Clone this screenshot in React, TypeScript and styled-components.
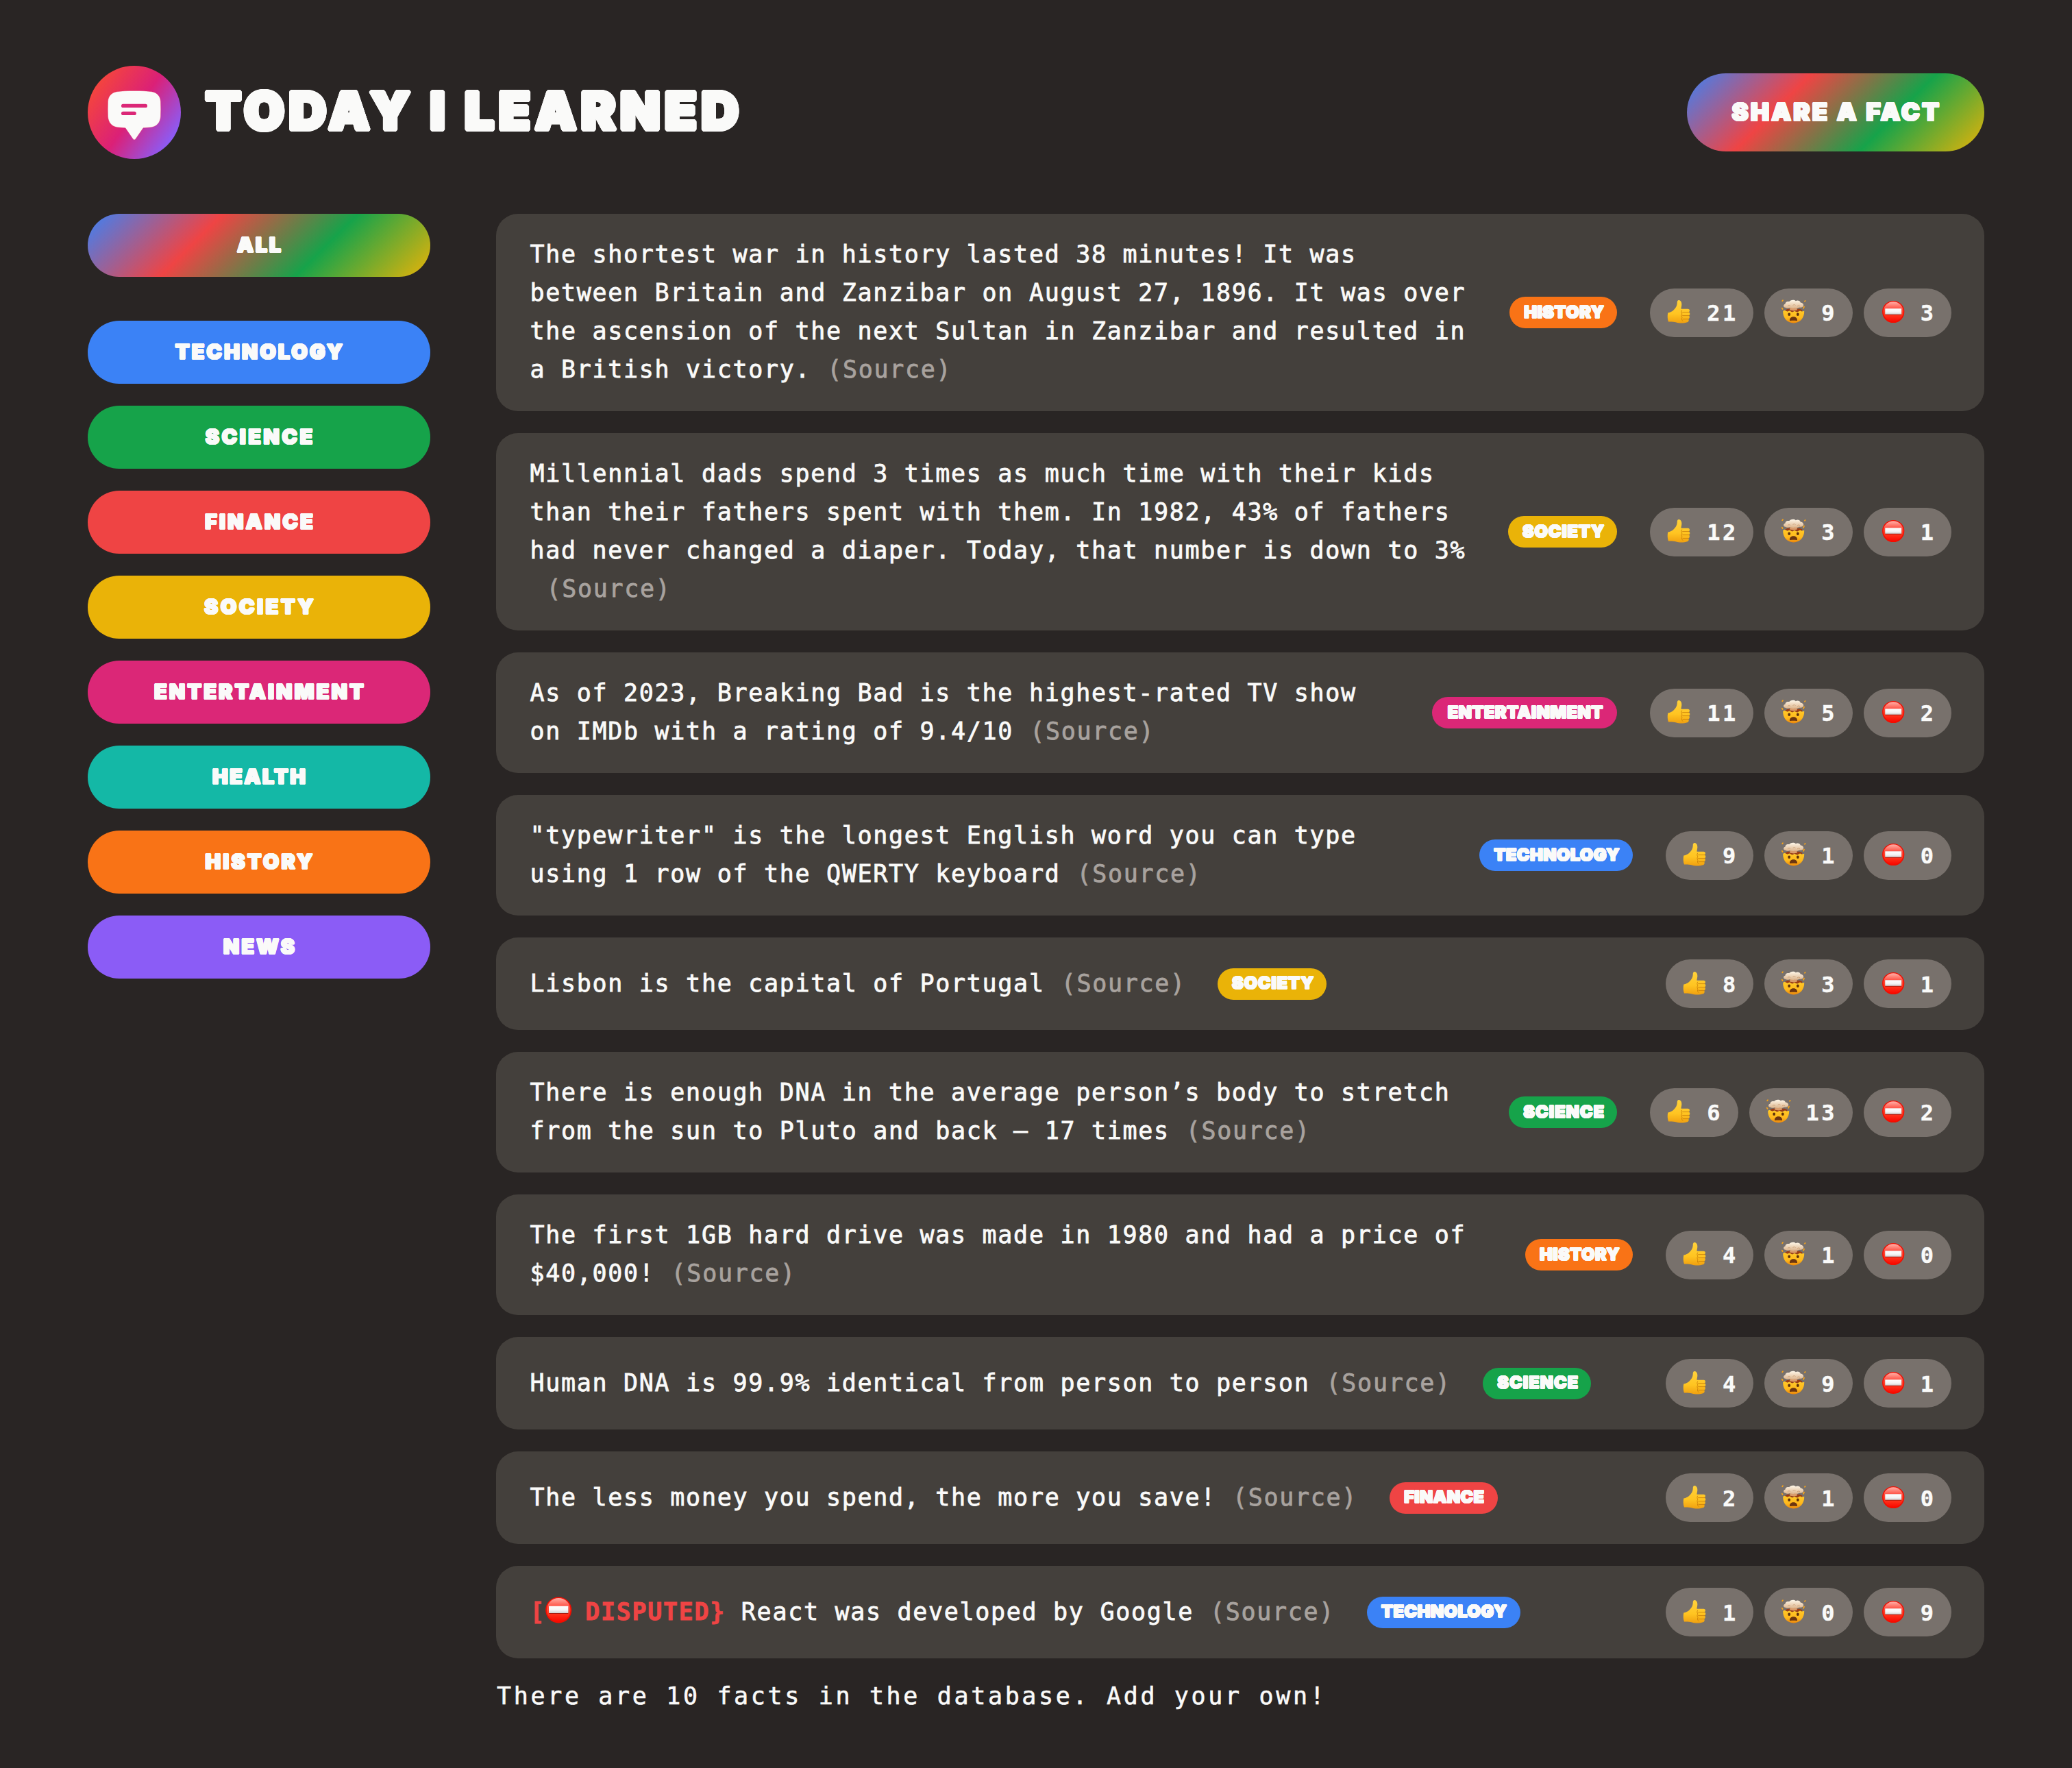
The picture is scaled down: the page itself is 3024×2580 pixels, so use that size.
import React from "react";
import styled, { createGlobalStyle, css } from "styled-components";

const GlobalStyle = createGlobalStyle`
  *, *::before, *::after { box-sizing: border-box; margin: 0; padding: 0; }
  body {
    background: #292524;
    color: #fafaf9;
    font-family: "DejaVu Sans Mono", "Liberation Mono", monospace;
  }
`;

const rainbow = "linear-gradient(135deg, #3b82f6, #ef4444, #16a34a, #eab308)";

/* Thickens and rounds the display letters by r pixels on every side. */
const roundLetters = (r: number) => {
  const d = (r * 0.707).toFixed(2);
  const a = (r * 0.924).toFixed(2);
  const b = (r * 0.383).toFixed(2);
  return [
    `${r}px 0`, `-${r}px 0`, `0 ${r}px`, `0 -${r}px`,
    `${d}px ${d}px`, `-${d}px ${d}px`, `${d}px -${d}px`, `-${d}px -${d}px`,
    `${a}px ${b}px`, `-${a}px ${b}px`, `${a}px -${b}px`, `-${a}px -${b}px`,
    `${b}px ${a}px`, `-${b}px ${a}px`, `${b}px -${a}px`, `-${b}px -${a}px`,
  ].join(", ");
};

const display = css`
  font-family: "Inter", "Open Sans", sans-serif;
  font-weight: 900;
  text-transform: uppercase;
  white-space: nowrap;
  color: #fafaf9;
`;

const Page = styled.div`
  min-height: 2580px;
  padding: 96px 128px;
  display: flex;
  flex-direction: column;
  gap: 80px;
`;

const Header = styled.header`
  height: 136px;
  display: flex;
  align-items: center;
  justify-content: space-between;
`;

const Brand = styled.div`
  display: flex;
  align-items: center;
  gap: 36px;
`;

const Title = styled.h1`
  ${display}
  font-size: 75.5px;
  line-height: 1;
  letter-spacing: 6.9px;
  padding-bottom: 5px;
  text-shadow: ${roundLetters(3.2)};
`;

const ShareButton = styled.button`
  ${display}
  width: 434px;
  height: 114px;
  padding: 0 0 2px 3px;
  border: none;
  border-radius: 100px;
  background: ${rainbow};
  font-size: 36px;
  letter-spacing: 3.4px;
  text-shadow: ${roundLetters(1.3)};
`;

const Main = styled.main`
  display: grid;
  grid-template-columns: 500px 1fr;
  column-gap: 96px;
`;

const Sidebar = styled.ul`
  list-style: none;
  display: flex;
  flex-direction: column;
  gap: 32px;
`;

const SidebarItem = styled.li`
  &:first-child { margin-bottom: 32px; }
`;

const CategoryButton = styled.button<{ $bg: string; $track: number }>`
  ${display}
  width: 100%;
  height: 92px;
  display: block;
  padding: 0 0 2px ${(p) => p.$track}px;
  border: none;
  border-radius: 100px;
  background: ${(p) => p.$bg};
  font-size: 30px;
  letter-spacing: ${(p) => p.$track}px;
  text-shadow: ${roundLetters(1.1)};
`;

const Facts = styled.section`
  display: flex;
  flex-direction: column;
`;

const FactList = styled.ul`
  list-style: none;
  display: flex;
  flex-direction: column;
  gap: 32px;
`;

const Fact = styled.li`
  display: flex;
  align-items: center;
  gap: 48px;
  padding: 32px 48px;
  border-radius: 32px;
  background: #44403c;
`;

const FactText = styled.p`
  font-size: 35px;
  line-height: 56px;
  letter-spacing: 1.69px;
  -webkit-text-stroke: 0.8px currentColor;
  transform: translate(1.5px, -1px);
`;

const Source = styled.a`
  display: inline-block;
  margin-left: 24px;
  color: #a8a29e;
`;

const Disputed = styled.span`
  color: #ef4444;
  font-weight: 700;

  svg {
    width: 45px;
    height: 45px;
    margin: 0 -6.3px 0 -3.5px;
    vertical-align: -8px;
  }
`;

const Tag = styled.span<{ $bg: string; $width: number; $track: number }>`
  ${display}
  flex: none;
  display: flex;
  align-items: center;
  justify-content: center;
  width: ${(p) => p.$width}px;
  height: 46px;
  border-radius: 100px;
  background: ${(p) => p.$bg};
  font-size: 25px;
  line-height: 1;
  letter-spacing: ${(p) => p.$track}px;
  padding: 0 0 2px ${(p) => p.$track + 2}px;
  text-shadow: ${roundLetters(0.8)};
`;

const Votes = styled.div`
  flex: none;
  display: flex;
  gap: 16px;
  margin-left: auto;
`;

const VoteButton = styled.button`
  height: 71px;
  padding: 0 22.600px 0 24px;
  display: flex;
  align-items: center;
  gap: 21px;
  border: none;
  border-radius: 100px;
  background: #78716c;
  color: #fafaf9;
  font-family: "DejaVu Sans Mono", "Liberation Mono", monospace;
  font-weight: 700;
  font-size: 32px;
  line-height: 40px;
  letter-spacing: 3.5px;
  -webkit-text-stroke: 0.4px currentColor;

  svg { width: 38px; height: 38px; flex: none; margin-bottom: 2px; }
  span { padding-top: 2px; }
`;

const Footnote = styled.p`
  margin-top: 28px;
  font-size: 35px;
  line-height: 56px;
  letter-spacing: 3.65px;
  -webkit-text-stroke: 0.6px currentColor;
  transform: translate(1px, -1px);
`;

const Logo = () => (
  <svg width="136" height="136" viewBox="0 0 136 136" aria-hidden="true">
    <defs>
      <linearGradient id="logoFill" gradientUnits="userSpaceOnUse" x1="12" y1="29" x2="124" y2="107">
        <stop offset="0" stopColor="#f4443e" />
        <stop offset="0.5" stopColor="#db2077" />
        <stop offset="1" stopColor="#8b5cf6" />
      </linearGradient>
    </defs>
    <circle cx="68" cy="68" r="68" fill="url(#logoFill)" />
    <path
      d="M68 36.4C78 36.4 87 36.9 93.5 37.8C101.500 39.200 106.200 44.500 106.500 52.500C106.800 59.500 106.800 67 106.500 74C106 82.500 101 88.500 93 89.700C89.500 90.100 85 90.500 81 90.700L69.800 107Q68 109 66.200 107L55 90.700C51 90.500 46.500 90.100 43 89.700C35 88.500 30 82.500 29.500 74C29.200 67 29.200 59.500 29.500 52.500C29.800 44.500 34.500 39.200 42.500 37.800C49 36.900 58 36.400 68 36.400Z"
      fill="#fafaf9"
      stroke="#e11d55"
      strokeOpacity="0.45"
      strokeWidth="0.8"
    />
    <rect x="49" y="55.700" width="38" height="5.300" rx="2.600" fill="#db2777" />
    <rect x="49" y="66.700" width="21.800" height="5.300" rx="2.600" fill="#db2777" />
  </svg>
);

const ThumbsUp = () => (
  <svg viewBox="0 0 38 38" aria-hidden="true">
    <defs>
      <linearGradient id="thumb" x1="0" y1="0" x2="0" y2="1">
        <stop offset="0" stopColor="#ffd23c" />
        <stop offset="0.600" stopColor="#ffc421" />
        <stop offset="1" stopColor="#f0a010" />
      </linearGradient>
    </defs>
    <path
      d="M2.300 20.500C5.500 20 8.500 18.500 10.500 16.500C13.500 13.500 15.600 10.500 15.700 6.500C15.700 3.500 16.300 2 18.200 2C21.300 2.200 22.600 5.500 22.300 9C22.100 11.500 21.300 13.800 21.600 14.800H31.500C34.500 14.800 34.800 18.800 32.300 19.500C35 20 35 24 32.600 24.500C34.500 25.200 34.300 29 31.900 29.500C33.300 30.400 33 33.800 30.500 34.300C26 35.800 18.500 36 14.500 34.500C10.500 33.500 7 33.300 3 33.500C1.500 30 1.400 24 2.300 20.500Z"
      fill="url(#thumb)"
    />
    <path
      d="M33 19.600H23.600M33 24.600H23.600M32 29.600H24M22.600 17C21.200 19 22 21 23 22C21.500 24 21.800 26 23 27.300C22 29 22.300 31 24 32.500"
      fill="none"
      stroke="#c67a08"
      strokeWidth="1"
      strokeOpacity="0.8"
      strokeLinecap="round"
    />
  </svg>
);

const ExplodingHead = () => (
  <svg viewBox="0 0 38 38" aria-hidden="true">
    <defs>
      <linearGradient id="face" x1="0" y1="0" x2="0" y2="1">
        <stop offset="0" stopColor="#ffc928" />
        <stop offset="0.600" stopColor="#ffb81c" />
        <stop offset="1" stopColor="#ea860c" />
      </linearGradient>
      <linearGradient id="cloud" x1="0" y1="0" x2="0" y2="1">
        <stop offset="0" stopColor="#fff8ea" />
        <stop offset="1" stopColor="#dcb48c" />
      </linearGradient>
    </defs>
    <path
      d="M3.200 17.800L6 16.800L9.500 18.600L13 17.200L16.500 19.600L20 17.800L24 19.500L28 17.200L31 18.600L34.200 17.800C34.600 28 28 35.500 18.700 35.500C9.400 35.500 2.800 28 3.200 17.800Z"
      fill="url(#face)"
    />
    <path d="M6 16.800L10 14.800H27.500L31.500 16.600L31 18.600L28 17.200L24 19.500L20 17.800L16.500 19.600L13 17.200L9.500 18.600Z" fill="#9c3d14" />
    <path d="M14 11H23L24 16.500L19 17.600L13 16.500Z" fill="#d99c6c" />
    <path
      d="M6.500 12.800C3.300 12.400 3.300 8.200 6.400 7.700C6.500 4.400 10 3.200 12.200 4.300C14 1.300 19.500 0.900 21.800 3.200C24.500 1.800 28.300 3 28.700 5.600C32.500 5.800 34.500 9.400 32.300 11.600C30.500 13.500 27.800 12.400 26.500 12.800C24.500 14.600 21.500 13.200 20 13.500C17 14.800 14.500 13.200 12.500 13.300C10.500 14.200 8 14 6.500 12.800Z"
      fill="url(#cloud)"
    />
    <path d="M10 10.500Q12 8.500 14 10.500M17.500 9.500Q19.500 7.500 21.500 9.500M24 10.800Q26 9 28 10.800" stroke="#c89a70" strokeWidth="0.800" fill="none" />
    <path d="M2.200 3.200L3 2.200M35 3.800L35.600 3M1.800 13.600L2.600 15M34 11.600L33 13.800" stroke="#f7a318" strokeWidth="1.800" strokeLinecap="round" />
    <ellipse cx="12.200" cy="22.800" rx="1.900" ry="2.300" fill="#5c2f0c" />
    <ellipse cx="24.800" cy="22.800" rx="1.900" ry="2.300" fill="#5c2f0c" />
    <path d="M13 31.200C13 28 15.500 26.200 18.500 26.200C21.500 26.200 24 28 24 31.200C24 32.500 22 31.800 18.500 31.800C15 31.800 13 32.500 13 31.200Z" fill="#6b3510" />
  </svg>
);

const NoEntry = () => (
  <svg viewBox="0 0 38 38" aria-hidden="true">
    <defs>
      <linearGradient id="sign" x1="0" y1="0" x2="0" y2="1">
        <stop offset="0" stopColor="#ffb0a8" />
        <stop offset="0.380" stopColor="#ff4a3c" />
        <stop offset="0.620" stopColor="#ff3a20" />
        <stop offset="1" stopColor="#fa0800" />
      </linearGradient>
      <linearGradient id="bar" x1="0" y1="0" x2="0" y2="1">
        <stop offset="0" stopColor="#ffffff" />
        <stop offset="0.600" stopColor="#f4f4f4" />
        <stop offset="1" stopColor="#cfcfcf" />
      </linearGradient>
    </defs>
    <circle cx="19.200" cy="19" r="16.100" fill="#f20d00" />
    <circle cx="19.200" cy="18.800" r="14.600" fill="url(#sign)" />
    <rect x="7.200" y="14.500" width="24" height="9.200" rx="0.600" fill="#a81c10" />
    <rect x="7.200" y="14.200" width="24" height="8.600" rx="0.500" fill="url(#bar)" />
  </svg>
);

type Category = { bg: string; buttonTrack: number; tagWidth: number; tagTrack: number };

const categories: Record<string, Category> = {
  technology: { bg: "#3b82f6", buttonTrack: 3.3, tagWidth: 224, tagTrack: 0.5 },
  science: { bg: "#16a34a", buttonTrack: 3.8, tagWidth: 158, tagTrack: 1.1 },
  finance: { bg: "#ef4444", buttonTrack: 3.4, tagWidth: 158, tagTrack: 0.4 },
  society: { bg: "#eab308", buttonTrack: 3.8, tagWidth: 159, tagTrack: 0.9 },
  entertainment: { bg: "#db2777", buttonTrack: 3.4, tagWidth: 270, tagTrack: 0.5 },
  health: { bg: "#14b8a6", buttonTrack: 2.7, tagWidth: 150, tagTrack: 0.6 },
  history: { bg: "#f97316", buttonTrack: 3.4, tagWidth: 157, tagTrack: 0.5 },
  news: { bg: "#8b5cf6", buttonTrack: 3.4, tagWidth: 120, tagTrack: 0.6 },
};

type FactData = { text: string; category: string; votes: [number, number, number] };

const facts: FactData[] = [
  {
    text: "The shortest war in history lasted 38 minutes! It was between Britain and Zanzibar on August 27, 1896. It was over the ascension of the next Sultan in Zanzibar and resulted in a British victory.",
    category: "history",
    votes: [21, 9, 3],
  },
  {
    text: "Millennial dads spend 3 times as much time with their kids than their fathers spent with them. In 1982, 43% of fathers had never changed a diaper. Today, that number is down to 3%",
    category: "society",
    votes: [12, 3, 1],
  },
  {
    text: "As of 2023, Breaking Bad is the highest-rated TV show on IMDb with a rating of 9.4/10",
    category: "entertainment",
    votes: [11, 5, 2],
  },
  {
    text: '"typewriter" is the longest English word you can type using 1 row of the QWERTY keyboard',
    category: "technology",
    votes: [9, 1, 0],
  },
  { text: "Lisbon is the capital of Portugal", category: "society", votes: [8, 3, 1] },
  {
    text: "There is enough DNA in the average person’s body to stretch from the sun to Pluto and back — 17 times",
    category: "science",
    votes: [6, 13, 2],
  },
  {
    text: "The first 1GB hard drive was made in 1980 and had a price of $40,000!",
    category: "history",
    votes: [4, 1, 0],
  },
  { text: "Human DNA is 99.9% identical from person to person", category: "science", votes: [4, 9, 1] },
  { text: "The less money you spend, the more you save!", category: "finance", votes: [2, 1, 0] },
  { text: "React was developed by Google", category: "technology", votes: [1, 0, 9] },
];

const FactCard = ({ fact }: { fact: FactData }) => {
  const { bg, tagWidth, tagTrack } = categories[fact.category];
  const [up, wow, down] = fact.votes;
  return (
    <Fact>
      <FactText>
        {up + wow < down && (
          <>
            <Disputed>
              [<NoEntry /> DISPUTED{"}"}
            </Disputed>{" "}
          </>
        )}
        {fact.text}
        <Source>(Source)</Source>
      </FactText>
      <Tag $bg={bg} $width={tagWidth} $track={tagTrack}>
        {fact.category}
      </Tag>
      <Votes>
        <VoteButton>
          <ThumbsUp />
          <span>{up}</span>
        </VoteButton>
        <VoteButton>
          <ExplodingHead />
          <span>{wow}</span>
        </VoteButton>
        <VoteButton>
          <NoEntry />
          <span>{down}</span>
        </VoteButton>
      </Votes>
    </Fact>
  );
};

export default function App() {
  return (
    <>
      <GlobalStyle />
      <Page>
        <Header>
          <Brand>
            <Logo />
            <Title>Today I Learned</Title>
          </Brand>
          <ShareButton>Share a fact</ShareButton>
        </Header>
        <Main>
          <Sidebar>
            <SidebarItem>
              <CategoryButton $bg={rainbow} $track={3}>
                All
              </CategoryButton>
            </SidebarItem>
            {Object.entries(categories).map(([name, c]) => (
              <SidebarItem key={name}>
                <CategoryButton $bg={c.bg} $track={c.buttonTrack}>
                  {name}
                </CategoryButton>
              </SidebarItem>
            ))}
          </Sidebar>
          <Facts>
            <FactList>
              {facts.map((fact) => (
                <FactCard key={fact.text} fact={fact} />
              ))}
            </FactList>
            <Footnote>There are 10 facts in the database. Add your own!</Footnote>
          </Facts>
        </Main>
      </Page>
    </>
  );
}
